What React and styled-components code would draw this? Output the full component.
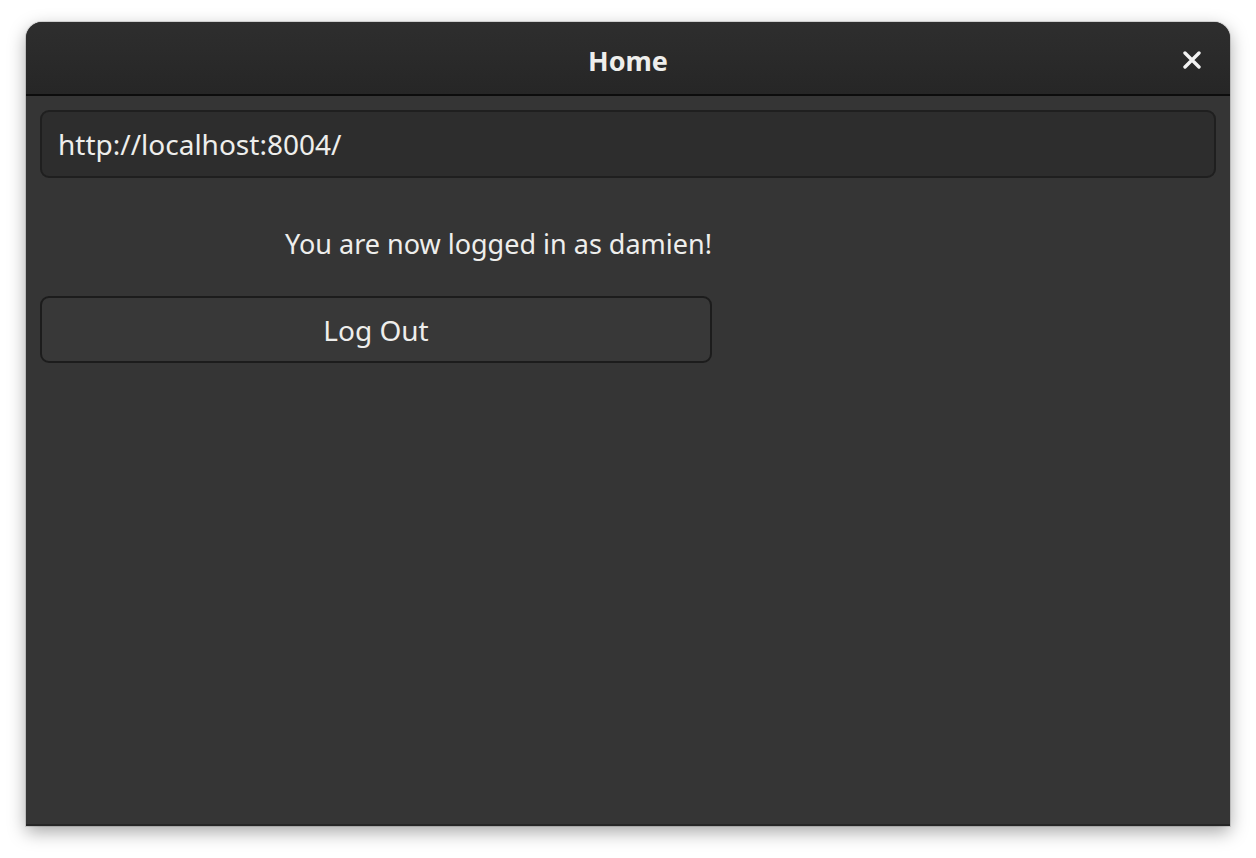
import React from 'react';
import styled, { createGlobalStyle } from 'styled-components';

const GlobalStyle = createGlobalStyle`
  html, body {
    margin: 0;
    padding: 0;
    background: #ffffff;
    font-family: "Noto Sans", "Open Sans", sans-serif;
  }
`;

const Page = styled.div`
  width: 1256px;
  height: 858px;
  padding: 22px 26px 0 26px;
  box-sizing: border-box;
`;

const Window = styled.div`
  width: 1204px;
  height: 804px;
  display: flex;
  flex-direction: column;
  background: #353535;
  border-radius: 16px 16px 0 0;
  border-bottom: 2px solid #262626;
  box-sizing: border-box;
  overflow: hidden;
  box-shadow: 0 6px 18px rgba(0, 0, 0, 0.35), 0 0 0 1px rgba(0, 0, 0, 0.12);
`;

const HeaderBar = styled.div`
  height: 74px;
  flex-shrink: 0;
  display: flex;
  align-items: center;
  justify-content: center;
  position: relative;
  background: linear-gradient(#2e2e2e, #262626);
  border-bottom: 2px solid #0c0c0c;
  box-sizing: border-box;
`;

const Title = styled.div`
  color: #eeeeec;
  font-weight: 700;
  font-size: 27px;
  margin-top: 4px;
`;

const CloseButton = styled.button`
  position: absolute;
  right: 26px;
  top: 26px;
  width: 24px;
  height: 24px;
  padding: 0;
  background: none;
  border: none;
  display: flex;
  align-items: center;
  justify-content: center;
`;

const Content = styled.div`
  display: flex;
  flex-direction: column;
  padding: 14px 14px;
`;

const Entry = styled.div`
  height: 68px;
  display: flex;
  align-items: center;
  padding: 0 16px;
  background: #2d2d2d;
  border: 2px solid #1f1f1f;
  border-radius: 9px;
  box-sizing: border-box;
  color: #eeeeec;
  font-size: 28px;
`;

const Form = styled.div`
  width: 672px;
  display: flex;
  flex-direction: column;
  margin-top: 47px;
`;

const Label = styled.div`
  text-align: right;
  color: #eeeeec;
  font-size: 27px;
  height: 38px;
  line-height: 38px;
`;

const Button = styled.button`
  margin-top: 33px;
  height: 67px;
  background: #383838;
  border: 2px solid #1c1c1c;
  border-radius: 9px;
  color: #eeeeec;
  font-family: inherit;
  font-size: 28px;
  box-sizing: border-box;
`;

export default function App() {
  return (
    <Page>
      <GlobalStyle />
      <Window>
        <HeaderBar>
          <Title>Home</Title>
          <CloseButton>
            <svg width="18" height="18" viewBox="0 0 18 18">
              <path d="M2 2 L16 16 M16 2 L2 16" stroke="#f2f2f2" strokeWidth="3.4" strokeLinecap="round" />
            </svg>
          </CloseButton>
        </HeaderBar>
        <Content>
          <Entry>http://localhost:8004/</Entry>
          <Form>
            <Label>You are now logged in as damien!</Label>
            <Button>Log Out</Button>
          </Form>
        </Content>
      </Window>
    </Page>
  );
}
